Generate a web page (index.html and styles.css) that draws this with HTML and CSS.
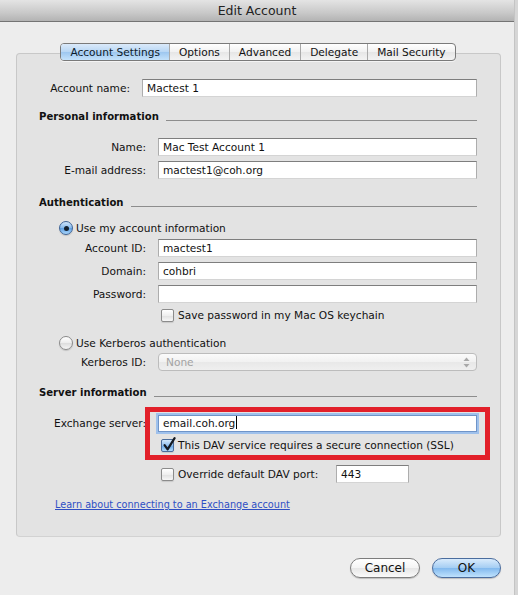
FILE: index.html
```html
<!DOCTYPE html>
<html>
<head>
<meta charset="utf-8">
<title>Edit Account</title>
<link rel="stylesheet" href="styles.css">
</head>
<body>
<div class="window">
  <div class="titlebar">Edit Account</div>
  <div class="content">
    <div class="group">
      <div class="tabs">
        <span class="tab sel">Account Settings</span>
        <span class="tab">Options</span>
        <span class="tab">Advanced</span>
        <span class="tab">Delegate</span>
        <span class="tab">Mail Security</span>
      </div>

      <div class="row r-acct"><span class="lbl lbl-a">Account name:</span><div class="field">Mactest 1</div></div>

      <div class="section s-personal"><span class="sec-title">Personal information</span><i class="rule"></i></div>
      <div class="row r-name"><span class="lbl">Name:</span><div class="field">Mac Test Account 1</div></div>
      <div class="row r-gap5"><span class="lbl">E-mail address:</span><div class="field">mactest1@coh.org</div></div>

      <div class="section s-auth"><span class="sec-title">Authentication</span><i class="rule"></i></div>
      <div class="optrow r-radio1"><span class="radio on"><i class="dot"></i></span><span>Use my account information</span></div>
      <div class="row r-acctid"><span class="lbl">Account ID:</span><div class="field">mactest1</div></div>
      <div class="row r-gap5"><span class="lbl">Domain:</span><div class="field">cohbri</div></div>
      <div class="row r-gap5"><span class="lbl">Password:</span><div class="field"></div></div>
      <div class="chkrow r-save"><span class="check"></span><span>Save password in my Mac OS keychain</span></div>
      <div class="optrow r-radio2"><span class="radio"></span><span>Use Kerberos authentication</span></div>
      <div class="row r-kerb"><span class="lbl">Kerberos ID:</span>
        <div class="popup"><span class="popup-text">None</span>
          <svg class="arrows" width="7" height="11" viewBox="0 0 7 11"><path d="M3.5 0.5 L6.5 4 L0.5 4 Z" fill="#a8a8a8"/><path d="M3.5 10.5 L6.5 7 L0.5 7 Z" fill="#a8a8a8"/></svg>
        </div>
      </div>

      <div class="section s-server"><span class="sec-title">Server information</span><i class="rule"></i></div>
      <div class="row r-exch"><span class="lbl">Exchange server:</span><div class="field focus">email.coh.org<span class="caret"></span></div></div>
      <div class="chkrow r-dav"><span class="check on">
        <svg class="tick" width="14" height="15" viewBox="0 0 14 15"><path d="M2.6 8.2 L5.6 12.4 L12.6 1.2" fill="none" stroke="#151a22" stroke-width="2.2" stroke-linecap="round" stroke-linejoin="round"/></svg>
      </span><span>This DAV service requires a secure connection (SSL)</span></div>
      <div class="chkrow r-port"><span class="check"></span><span class="port-label">Override default DAV port:</span><div class="field port">443</div></div>

      <div class="linkrow"><a class="link" href="#">Learn about connecting to an Exchange account</a></div>

      <div class="highlight"></div>
    </div>

    <div class="buttons">
      <span class="btn">Cancel</span>
      <span class="btn default">OK</span>
    </div>
  </div>
</div>
</body>
</html>
```

FILE: styles.css
```css
html, body {
  margin: 0;
  padding: 0;
}
body {
  background: #d6d6d6;
  font-family: "DejaVu Sans", "Noto Sans", sans-serif;
  font-size: 10.6px;
  color: #111;
}
.window {
  width: 515px;
  height: 595px;
  background: #ededed;
  box-sizing: border-box;
  border-right: 1px solid #c4c4c4;
}
.titlebar {
  height: 22px;
  box-sizing: border-box;
  border-bottom: 1px solid #747474;
  background: linear-gradient(#e4e4e4, #c9c9c9 60%, #b3b3b3);
  text-align: center;
  font-size: 12.5px;
  line-height: 22px;
  color: #222;
}
.content {
  padding: 31px 13px 0 16px;
}
.group {
  position: relative;
  height: 484px;
  box-sizing: border-box;
  border: 1px solid #c8c8c8;
  border-bottom-color: #d2d2d2;
  border-radius: 4px;
  background: #e3e3e3;
  padding-right: 23px;
  display: flex;
  flex-direction: column;
}
.tabs {
  align-self: center;
  margin-top: -11px;
  margin-left: 22px;
  display: flex;
  height: 18px;
  box-sizing: border-box;
  border: 1px solid #7a7a7a;
  border-radius: 4px;
  overflow: hidden;
  background: linear-gradient(#ffffff, #f1f1f1 50%, #e6e6e6 51%, #f3f3f3);
  box-shadow: 0 1px 0 rgba(255,255,255,0.6);
}
.tab {
  padding: 0 9px;
  line-height: 16px;
  border-left: 1px solid #a9a9a9;
  white-space: nowrap;
}
.tab:first-child {
  border-left: none;
}
.tab.sel {
  background: linear-gradient(#dbeafa, #b7d6f4 50%, #9dc6ef 51%, #c4e2fb);
  color: #0d1a2a;
}

.row {
  display: flex;
  align-items: center;
  height: 18px;
  flex: none;
}
.lbl {
  flex: none;
  width: 141px;
  box-sizing: border-box;
  padding-right: 12px;
  text-align: right;
  white-space: nowrap;
}
.lbl-a {
  width: 125px;
}
.field {
  flex: 1;
  height: 18px;
  box-sizing: border-box;
  background: #fff;
  border: 1px solid #adadad;
  border-top-color: #7e7e7e;
  border-bottom-color: #d4d4d4;
  padding: 0 4px;
  line-height: 16px;
  white-space: nowrap;
}
.field.focus {
  height: 17px;
  line-height: 15px;
  border-color: #6f94c8;
  box-shadow: 0 0 0 2px #9fc1ec;
  margin-top: 1px;
}
.caret {
  display: inline-block;
  width: 1px;
  height: 13px;
  background: #000;
  vertical-align: -2px;
  margin-left: 1px;
}
.r-acct { margin-top: 18px; }
.r-name { margin-top: 14px; }
.r-gap5 { margin-top: 5px; }
.r-acctid { margin-top: 3px; }
.r-kerb { margin-top: 2px; }
.r-exch { margin-top: 13px; height: 20px; }

.section {
  display: flex;
  align-items: flex-start;
  height: 14px;
  padding-left: 22px;
  gap: 7px;
  flex: none;
}
.sec-title {
  font-weight: bold;
  font-size: 10.1px;
  line-height: 14px;
  white-space: nowrap;
}
.rule {
  flex: 1;
  margin-top: 10px;
  border-top: 1px solid #8d8d8d;
}
.s-personal { margin-top: 13px; }
.s-auth { margin-top: 17px; }
.s-server { margin-top: 15px; }

.optrow {
  display: flex;
  align-items: center;
  height: 16px;
  padding-left: 42px;
  gap: 3px;
  flex: none;
}
.r-radio1 { margin-top: 10px; }
.r-radio2 { margin-top: 13px; }
.radio {
  width: 14px;
  height: 14px;
  box-sizing: border-box;
  border-radius: 50%;
  border: 1px solid #8a8a8a;
  background: linear-gradient(#ffffff, #ececec 50%, #dcdcdc 51%, #f6f6f6);
  box-shadow: 0 1px 1px rgba(0,0,0,0.15);
  display: flex;
  align-items: center;
  justify-content: center;
}
.radio.on {
  border-color: #3f6496;
  background: linear-gradient(#cfe5fb, #86b9ec 50%, #5c9ee3 51%, #a9d6fb);
}
.dot {
  width: 5px;
  height: 5px;
  border-radius: 50%;
  background: #14202e;
}

.chkrow {
  display: flex;
  align-items: center;
  height: 14px;
  padding-left: 144px;
  gap: 4px;
  flex: none;
}
.r-save { margin-top: 5px; }
.r-dav { margin-top: 5px; }
.r-port { margin-top: 13px; height: 18px; }
.check {
  position: relative;
  flex: none;
  width: 13px;
  height: 13px;
  box-sizing: border-box;
  border-radius: 2px;
  border: 1px solid #8b8b8b;
  background: linear-gradient(#ffffff, #efefef 50%, #e0e0e0 51%, #f7f7f7);
  box-shadow: 0 1px 1px rgba(0,0,0,0.12);
}
.check.on {
  border-color: #4a6c9b;
  background: linear-gradient(#d2e7fb, #8fbeee 50%, #65a4e5 51%, #b2dbfb);
}
.tick {
  position: absolute;
  left: 0;
  top: -3px;
}
.port-label {
  flex: none;
  width: 154px;
  white-space: nowrap;
}
.field.port {
  flex: none;
  width: 73px;
}

.popup {
  flex: 1;
  height: 18px;
  box-sizing: border-box;
  border: 1px solid #bcbcbc;
  border-radius: 4px;
  background: linear-gradient(#fbfbfb, #f1f1f1 50%, #e8e8e8 51%, #efefef);
  display: flex;
  align-items: center;
  padding: 0 6px 0 7px;
}
.popup-text {
  flex: 1;
  color: #a3a3a3;
}
.arrows {
  flex: none;
}

.linkrow {
  margin-top: 14px;
  height: 14px;
  line-height: 14px;
  padding-left: 38px;
  flex: none;
}
.link {
  color: #2f4fc4;
  text-decoration: underline;
  font-size: 9.7px;
}

.highlight {
  position: absolute;
  left: 128px;
  top: 353px;
  width: 345px;
  height: 53px;
  box-sizing: border-box;
  border: 5px solid #e2202a;
}

.buttons {
  margin-top: 21px;
  width: 485px;
  display: flex;
  justify-content: flex-end;
  gap: 12px;
}
.btn {
  height: 20px;
  box-sizing: border-box;
  border-radius: 10px;
  border: 1px solid #7d7d7d;
  background: linear-gradient(#ffffff, #f4f4f4 50%, #e6e6e6 51%, #fafafa);
  box-shadow: 0 1px 1px rgba(0,0,0,0.2);
  font-size: 12px;
  line-height: 18px;
  text-align: center;
  width: 70px;
  color: #111;
}
.btn.default {
  width: 69px;
  border-color: #4b6d9e;
  background: linear-gradient(#d9ebfc, #a4cdf3 50%, #82b9ee 51%, #bfe2fd);
}
```
